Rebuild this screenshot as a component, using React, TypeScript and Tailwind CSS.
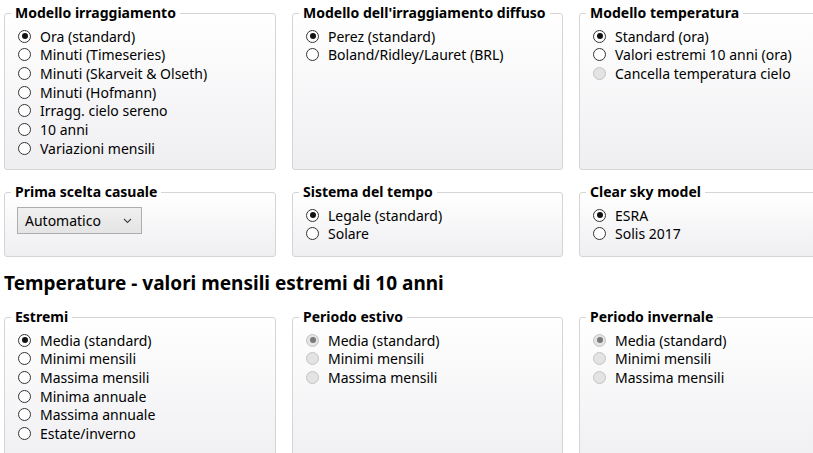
import type { ReactNode } from "react";

const FONT = { fontFamily: '"Noto Sans", "Open Sans", sans-serif' };

// Windows-style radio button with label
function Radio({
  label,
  checked = false,
  disabled = false,
}: { label: string; checked?: boolean; disabled?: boolean }) {
  return (
    <div className="flex h-[18.67px] items-center gap-[9px]">
      <span
        className={
          disabled
            ? "flex size-[13px] shrink-0 items-center justify-center rounded-full border border-[#c4c4c4] bg-[#e3e3e3]"
            : "flex size-[13px] shrink-0 items-center justify-center rounded-full border border-[#333333] bg-white"
        }
      >
        {checked && (
          <span
            className={
              disabled
                ? "size-[6px] rounded-full bg-[#7a7a7a]"
                : "size-[6px] rounded-full bg-[#111111]"
            }
          />
        )}
      </span>
      <span className="whitespace-nowrap text-[14px] text-black">{label}</span>
    </div>
  );
}

// Group box with a bold caption in the border
function Group({
  title,
  className,
  children,
}: { title: string; className: string; children: ReactNode }) {
  return (
    <fieldset
      className={`min-w-0 rounded-[3px] border border-[#d5d5d5] bg-linear-to-b from-white to-[#efeff2] px-[13px] ${className}`}
    >
      <legend className="ml-[-7px] whitespace-nowrap px-[4px] text-[14px] font-bold leading-[20px] text-black">
        {title}
      </legend>
      <div className="pt-[4px]">{children}</div>
    </fieldset>
  );
}

function Dropdown({ value }: { value: string }) {
  return (
    <div className="mt-[1px] ml-[-1px] flex h-[27px] w-[125px] items-center justify-between border border-[#adadad] bg-linear-to-b from-[#f0f0f0] to-[#e4e4e4] pl-[7px] pr-[7px]">
      <span className="text-[14px] text-black">{value}</span>
      <svg width="9" height="6" viewBox="0 0 9 6" className="mr-[2px]">
        <polyline points="1,1 4.5,4.5 8,1" fill="none" stroke="#444" strokeWidth="1.1" />
      </svg>
    </div>
  );
}

export default function App() {
  return (
    <div className="h-[453px] w-[813px] overflow-hidden bg-white pl-[4px] pt-[3px]" style={FONT}>
      <div className="grid w-[848px] grid-cols-[272px_271px_272px] gap-x-[16px]">
        <Group title="Modello irraggiamento" className="h-[167px]">
          <Radio label="Ora (standard)" checked />
          <Radio label="Minuti (Timeseries)" />
          <Radio label="Minuti (Skarveit & Olseth)" />
          <Radio label="Minuti (Hofmann)" />
          <Radio label="Irragg. cielo sereno" />
          <Radio label="10 anni" />
          <Radio label="Variazioni mensili" />
        </Group>
        <Group title="Modello dell'irraggiamento diffuso" className="h-[167px]">
          <Radio label="Perez (standard)" checked />
          <Radio label="Boland/Ridley/Lauret (BRL)" />
        </Group>
        <Group title="Modello temperatura" className="h-[167px]">
          <Radio label="Standard (ora)" checked />
          <Radio label="Valori estremi 10 anni (ora)" />
          <Radio label="Cancella temperatura cielo" disabled />
        </Group>
      </div>

      <div className="mt-[12px] grid w-[848px] grid-cols-[272px_271px_272px] gap-x-[16px]">
        <Group title="Prima scelta casuale" className="h-[75px]">
          <Dropdown value="Automatico" />
        </Group>
        <Group title="Sistema del tempo" className="h-[75px]">
          <Radio label="Legale (standard)" checked />
          <Radio label="Solare" />
        </Group>
        <Group title="Clear sky model" className="h-[75px]">
          <Radio label="ESRA" checked />
          <Radio label="Solis 2017" />
        </Group>
      </div>

      <h2 className="mt-[13px] text-[19px] font-bold leading-[26px] text-black">
        Temperature - valori mensili estremi di 10 anni
      </h2>

      <div className="mt-[11px] grid w-[848px] grid-cols-[272px_271px_272px] gap-x-[16px]">
        <Group title="Estremi" className="h-[160px]">
          <Radio label="Media (standard)" checked />
          <Radio label="Minimi mensili" />
          <Radio label="Massima mensili" />
          <Radio label="Minima annuale" />
          <Radio label="Massima annuale" />
          <Radio label="Estate/inverno" />
        </Group>
        <Group title="Periodo estivo" className="h-[160px]">
          <Radio label="Media (standard)" checked disabled />
          <Radio label="Minimi mensili" disabled />
          <Radio label="Massima mensili" disabled />
        </Group>
        <Group title="Periodo invernale" className="h-[160px]">
          <Radio label="Media (standard)" checked disabled />
          <Radio label="Minimi mensili" disabled />
          <Radio label="Massima mensili" disabled />
        </Group>
      </div>
    </div>
  );
}
